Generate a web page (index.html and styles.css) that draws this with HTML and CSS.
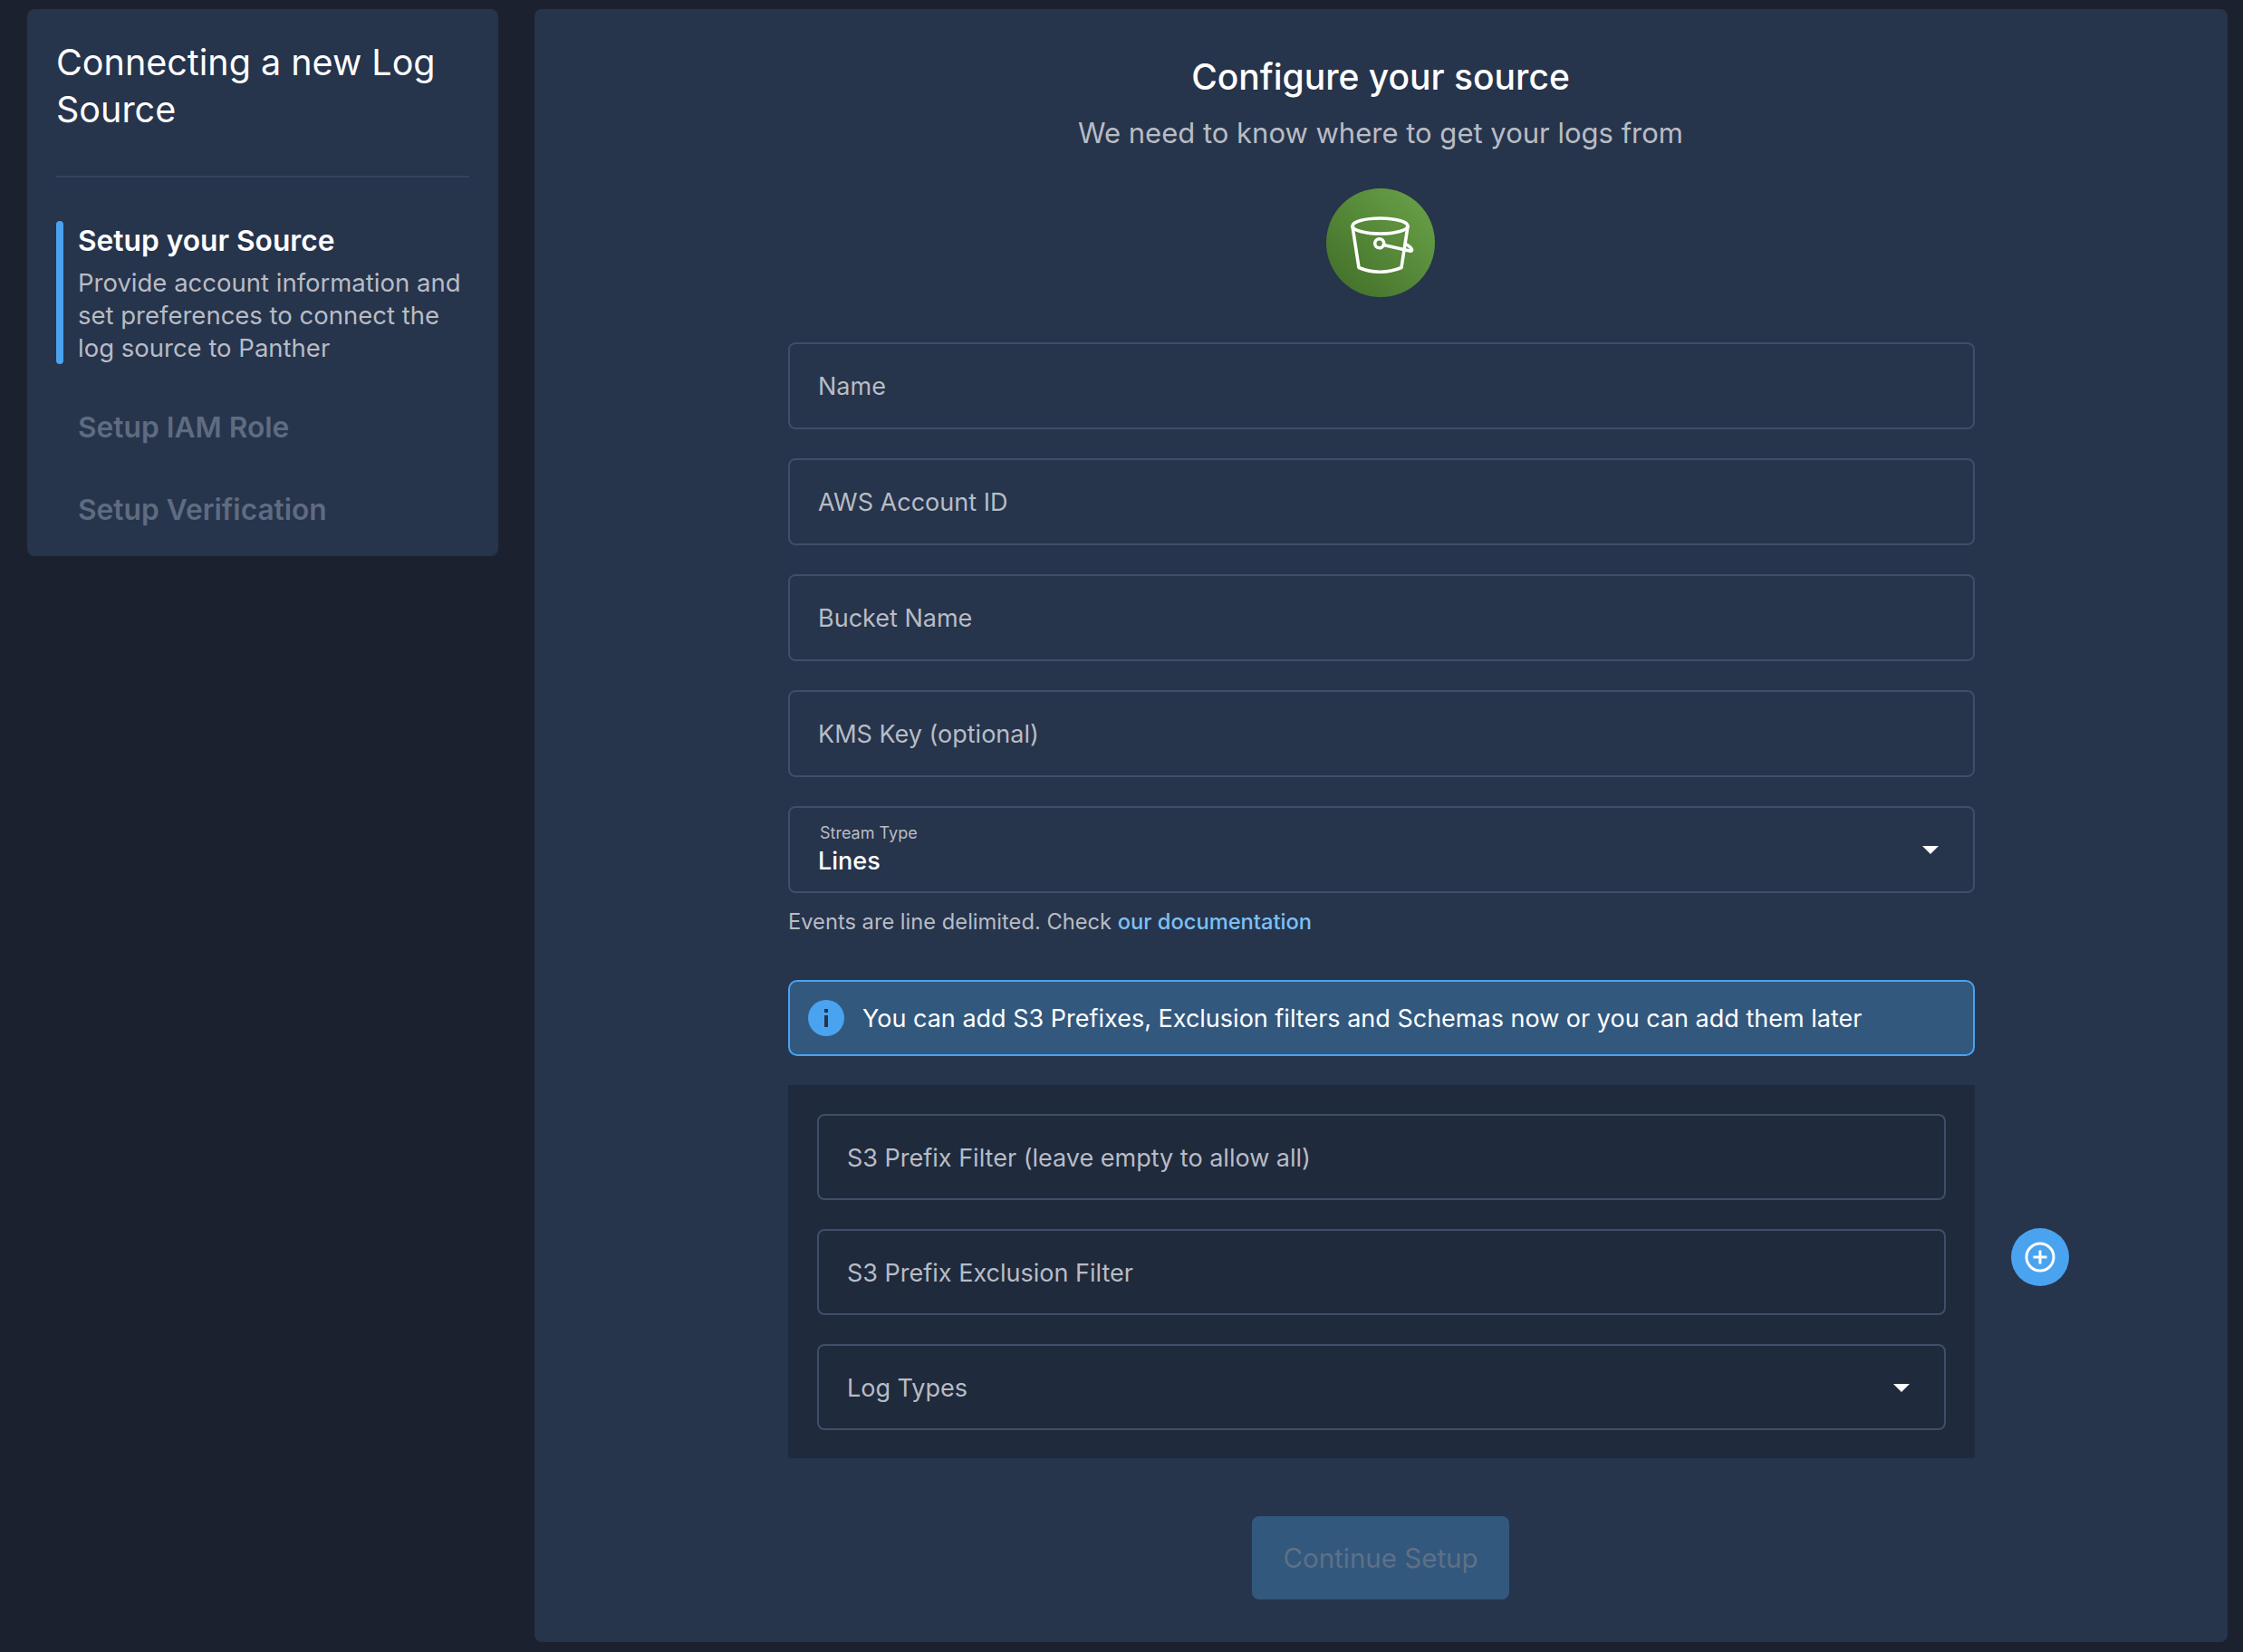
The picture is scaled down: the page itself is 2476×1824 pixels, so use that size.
FILE: index.html
```html
<!DOCTYPE html>
<html lang="en">

<head>
    <meta charset="UTF-8">
    <meta name="viewport" content="width=device-width, initial-scale=1.0">
    <title>Connecting a new Log Source</title>
    <link rel="stylesheet" href="styles.css">
</head>

<body>
    <div class="page">
        <aside class="sidebar">
            <h2 class="sidebar-title">Connecting a new Log Source</h2>
            <div class="divider"></div>
            <div class="step active">
                <div class="step-name">Setup your Source</div>
                <p class="step-text">Provide account information and set preferences to connect the log source to Panther</p>
            </div>
            <div class="step">
                <div class="step-name">Setup IAM Role</div>
            </div>
            <div class="step">
                <div class="step-name">Setup Verification</div>
            </div>
        </aside>

        <main class="panel">
            <h1 class="panel-title">Configure your source</h1>
            <p class="panel-sub">We need to know where to get your logs from</p>
            <div class="logo">
                <svg width="120" height="120" viewBox="0 0 120 120" fill="none" stroke="#fff" stroke-width="3.6" stroke-linecap="round" stroke-linejoin="round">
                    <ellipse cx="59.5" cy="41.5" rx="30.5" ry="8.5" />
                    <path d="M29 42 L36 87.5 Q59 97 83 87.5 L90 42" />
                    <circle cx="58.7" cy="60.7" r="5" />
                    <path d="M63.5 62.5 L92 69 Q95 69.5 94.5 67.5 Q93 64.5 89.5 62.5" />
                </svg>
            </div>

            <form class="form">
                <div class="field">Name</div>
                <div class="field">AWS Account ID</div>
                <div class="field">Bucket Name</div>
                <div class="field">KMS Key (optional)</div>
                <div class="field select">
                    <div>
                        <div class="field-label">Stream Type</div>
                        <div class="field-value">Lines</div>
                    </div>
                    <span class="caret"></span>
                </div>
                <p class="hint">Events are line delimited. Check <a href="#">our documentation</a></p>

                <div class="alert">
                    <svg class="alert-icon" width="40" height="40" viewBox="0 0 40 40">
                        <circle cx="20" cy="20" r="20" fill="#4aa3ef" />
                        <rect x="18" y="17" width="4" height="13" fill="#26344c" />
                        <rect x="18" y="10" width="4" height="4" fill="#26344c" />
                    </svg>
                    <span>You can add S3 Prefixes, Exclusion filters and Schemas now or you can add them later</span>
                </div>

                <div class="filters">
                    <div class="field">S3 Prefix Filter (leave empty to allow all)</div>
                    <div class="field">S3 Prefix Exclusion Filter</div>
                    <div class="field select">
                        <div>Log Types</div>
                        <span class="caret"></span>
                    </div>
                    <button class="add" type="button">
                        <svg width="34" height="34" viewBox="0 0 34 34" fill="none" stroke="#fff" stroke-width="3">
                            <circle cx="17" cy="17" r="15" />
                            <path d="M17 9.5 V24.5 M9.5 17 H24.5" />
                        </svg>
                    </button>
                </div>

                <button class="submit" type="button" disabled>Continue Setup</button>
            </form>
        </main>
    </div>
</body>

</html>
```

FILE: styles.css
```css
* {
    box-sizing: border-box;
}

body {
    margin: 0;
    background-color: #1b212e;
    color: #fff;
    font-family: "Inter", "Noto Sans", sans-serif;
}

.page {
    display: flex;
    align-items: flex-start;
    gap: 40px;
    height: 1824px;
    padding: 10px 17px 11px 30px;
}

.sidebar {
    flex: 0 0 520px;
    height: 604px;
    padding: 33px 32px 32px;
    background: #26344c;
    border-radius: 8px;
}

.sidebar-title {
    margin: 0;
    font-size: 39.5px;
    font-weight: 400;
    line-height: 52px;
}

.divider {
    height: 2px;
    margin: 47px 0 48px;
    background: #34445f;
}

.step {
    padding-left: 24px;
    margin-bottom: 48px;
}

.step.active {
    position: relative;
    height: 158px;
    margin-bottom: 48px;
}

.step.active::before {
    content: "";
    position: absolute;
    left: 0;
    top: 0;
    bottom: 0;
    width: 8px;
    border-radius: 4px;
    background: #4aa3ef;
}

.step-name {
    padding-top: 1px;
    font-size: 31.7px;
    font-weight: 600;
    line-height: 42px;
    color: #5f6b80;
}

.active .step-name {
    color: #fff;
}

.step-text {
    margin: 7px 0 0;
    font-size: 27.5px;
    line-height: 36px;
    color: #b8bcc4;
}

.panel {
    flex: 1;
    height: 1803px;
    padding: 50px 1px 0 0;
    background: #26344c;
    border-radius: 8px;
    text-align: center;
}

.panel-title {
    margin: 0;
    font-size: 39px;
    font-weight: 500;
    line-height: 50px;
}

.panel-sub {
    margin: 17px 0 0;
    font-size: 31px;
    line-height: 40px;
    color: #b8bcc4;
}

.logo {
    width: 120px;
    height: 120px;
    margin: 41px auto 0;
    border-radius: 50%;
    background: linear-gradient(45deg, #3f6c27, #6ca44a);
}

.form {
    width: 1310px;
    margin: 50px 0 0 280px;
    text-align: left;
}

.field {
    display: flex;
    align-items: center;
    justify-content: space-between;
    height: 96px;
    padding: 0 31px;
    margin-bottom: 32px;
    border: 2px solid #3f4e69;
    border-radius: 8px;
    font-size: 27px;
    color: #b8bcc4;
}

.select {
    padding-right: 38px;
}

.field-label {
    font-size: 18px;
    line-height: 24px;
    margin-left: 2px;
}

.field-value {
    padding-top: 1px;
    font-size: 27px;
    font-weight: 500;
    line-height: 36px;
    color: #fff;
}

.caret {
    width: 0;
    height: 0;
    border-left: 9px solid transparent;
    border-right: 9px solid transparent;
    border-top: 9px solid #fff;
}

.hint {
    margin: -16px 0 0;
    font-size: 23.7px;
    line-height: 32px;
    color: #b8bcc4;
}

.hint a {
    color: #7cc0f5;
    font-weight: 500;
    text-decoration: none;
}

.alert {
    display: flex;
    align-items: center;
    gap: 20px;
    height: 84px;
    margin-top: 48px;
    padding: 0 20px;
    background: #32587e;
    border: 2px solid #4aa3ef;
    border-radius: 10px;
    font-size: 27px;
}

.filters {
    position: relative;
    margin-top: 32px;
    padding: 32px 32px 0;
    height: 412px;
    background: #1f2a3d;
}

.filters .field {
    height: 95px;
    padding-top: 2px;
    margin-bottom: 32px;
}

.add {
    position: absolute;
    left: calc(100% + 40px);
    top: 158px;
    display: flex;
    align-items: center;
    justify-content: center;
    width: 64px;
    height: 64px;
    padding: 0;
    border: none;
    border-radius: 50%;
    background: #4aa3ef;
}

.submit {
    display: block;
    width: 284px;
    height: 92px;
    margin: 64px 0 0 512px;
    border: none;
    border-radius: 8px;
    background: #32587e;
    color: #5f7086;
    font-family: inherit;
    font-size: 29.5px;
}
```
